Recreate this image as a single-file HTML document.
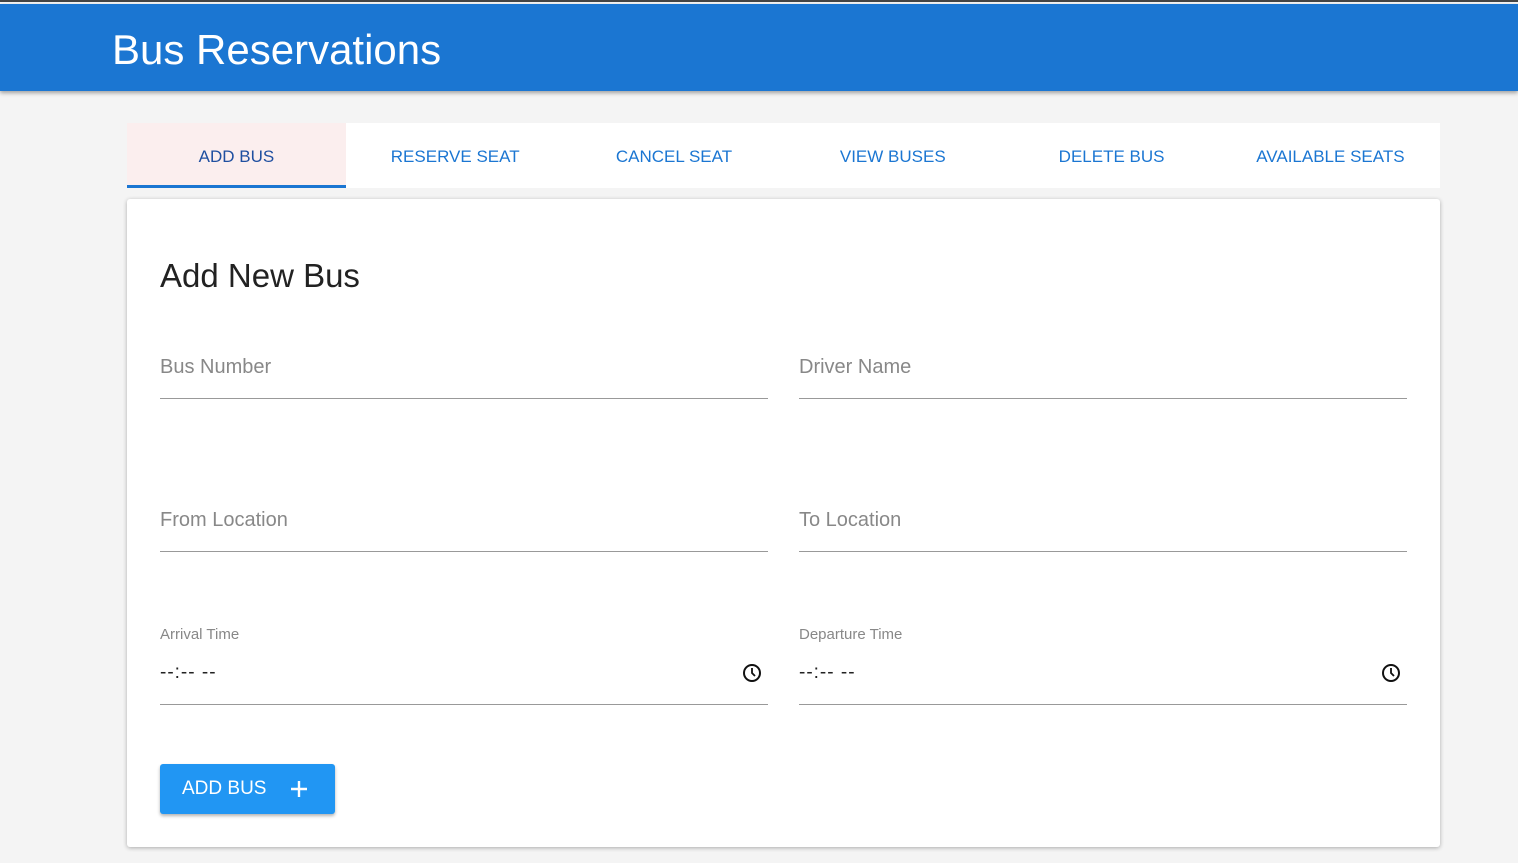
<!DOCTYPE html>
<html><head><style>
*{box-sizing:border-box;margin:0;padding:0}
body{width:1518px;height:863px;background:#f4f4f4;font-family:"Liberation Sans",sans-serif;position:relative;overflow:hidden;border-top:2px solid #444}
.hdr{position:absolute;top:2px;left:0;width:1518px;height:87px;background:#1b76d2;box-shadow:0 2px 4px rgba(0,0,0,.35)}
.hdr h1{position:absolute;left:112px;top:22px;font-weight:normal;color:#fff;font-size:42px;letter-spacing:0}
.tabs{position:absolute;left:127px;top:121px;width:1313px;height:65px;background:#fff;display:flex}
.tab{width:218.8px;text-align:center;line-height:68px;color:#1b76d2;font-size:17px}
.tab.a{background:#fbeeee;color:#1f4fa0;border-bottom:3px solid #1b76d2;line-height:68px}
.card{position:absolute;left:127px;top:197px;width:1313px;height:648px;background:#fff;box-shadow:0 1px 4px rgba(0,0,0,.3);border-radius:3px}
.card h2{position:absolute;left:33px;top:58px;font-weight:normal;font-size:33px;color:#222}
.f{position:absolute;width:608px;border-bottom:1px solid #999}
.ph{position:absolute;font-size:20px;color:#888}
.lbl{position:absolute;font-size:15px;color:#888}
.tv{position:absolute;font-size:19px;color:#222;letter-spacing:1px}
.clk{position:absolute}
.btn{position:absolute;left:33px;top:565px;width:175px;height:50px;background:#2196f3;border-radius:3px;box-shadow:0 2px 3px rgba(0,0,0,.3);color:#fff;font-size:19px;line-height:50px;padding-left:22px}
</style></head><body>
<div class="hdr"><h1>Bus Reservations</h1></div>
<div class="tabs">
<div class="tab a">ADD BUS</div><div class="tab">RESERVE SEAT</div><div class="tab">CANCEL SEAT</div><div class="tab">VIEW BUSES</div><div class="tab">DELETE BUS</div><div class="tab">AVAILABLE SEATS</div>
</div>
<div class="card">
<h2>Add New Bus</h2>
<div class="ph" style="left:33px;top:157px">Bus Number</div><div class="f" style="left:33px;top:150px;height:50px"></div>
<div class="ph" style="left:672px;top:157px">Driver Name</div><div class="f" style="left:672px;top:150px;height:50px"></div>
<div class="ph" style="left:33px;top:310px">From Location</div><div class="f" style="left:33px;top:303px;height:50px"></div>
<div class="ph" style="left:672px;top:310px">To Location</div><div class="f" style="left:672px;top:303px;height:50px"></div>
<div class="lbl" style="left:33px;top:427px">Arrival Time</div>
<div class="tv" style="left:33px;top:463px">--:-- --</div>
<svg class="clk" style="left:615px;top:464px" width="20" height="20" viewBox="0 0 20 20"><circle cx="10" cy="10" r="8" fill="none" stroke="#111" stroke-width="2"/><path d="M10 5v5l3 3" fill="none" stroke="#111" stroke-width="1.8"/></svg>
<div class="f" style="left:33px;top:455px;height:51px"></div>
<div class="lbl" style="left:672px;top:427px">Departure Time</div>
<div class="tv" style="left:672px;top:463px">--:-- --</div>
<svg class="clk" style="left:1254px;top:464px" width="20" height="20" viewBox="0 0 20 20"><circle cx="10" cy="10" r="8" fill="none" stroke="#111" stroke-width="2"/><path d="M10 5v5l3 3" fill="none" stroke="#111" stroke-width="1.8"/></svg>
<div class="f" style="left:672px;top:455px;height:51px"></div>
<div class="btn">ADD BUS<svg style="position:absolute;left:130px;top:16px" width="18" height="18" viewBox="0 0 18 18"><path d="M9 1v16M1 9h16" stroke="#fff" stroke-width="2.4"/></svg></div>
</div>
</body></html>
